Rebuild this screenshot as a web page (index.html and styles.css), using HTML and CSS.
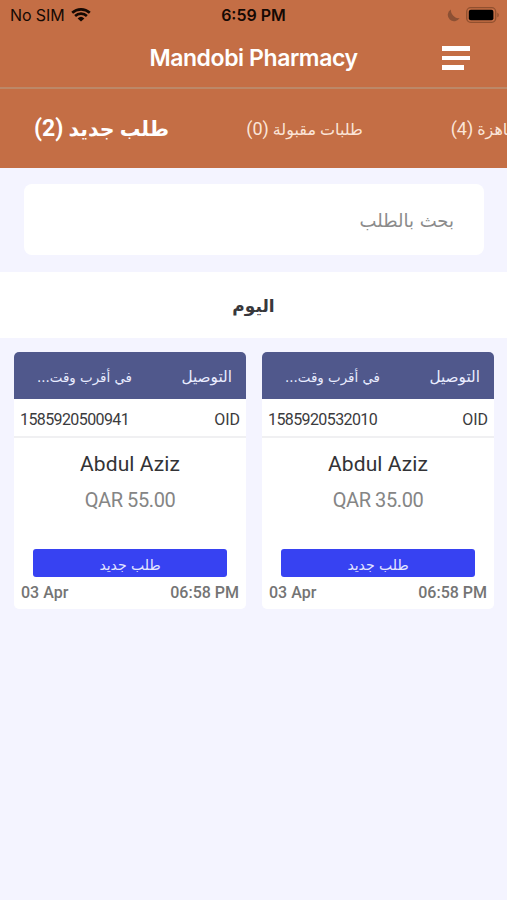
FILE: index.html
```html
<!DOCTYPE html>
<html lang="ar">
<head>
    <meta charset="UTF-8">
    <meta name="viewport" content="width=device-width, initial-scale=1.0">
    <title>Mandobi Pharmacy</title>
    <link rel="stylesheet" href="styles.css">
</head>
<body>
    <header class="header">
        <div class="status-bar">
            <div class="status-left">
                <span class="carrier">No SIM</span>
                <svg class="wifi" width="20" height="14" viewBox="0 0 20 14">
                    <path d="M1.2 4.8a12.9 12.9 0 0 1 17.6 0M4.1 8a8.6 8.6 0 0 1 11.8 0" fill="none" stroke="#150903" stroke-width="2.6"/>
                    <path d="M10 13.4L6.6 10.4a5 5 0 0 1 6.8 0z" fill="#150903"/>
                </svg>
            </div>
            <span class="clock">6:59 PM</span>
            <div class="status-right">
                <svg width="13" height="13" viewBox="0 0 13 13">
                    <path d="M3.8.6A6.3 6.3 0 1 0 12.6 9C8.4 10 3.8 6 3.8.6z" fill="#8c5034"/>
                </svg>
                <svg width="34" height="16" viewBox="0 0 34 16">
                    <rect x=".7" y=".7" width="29" height="14.6" rx="4" fill="none" stroke="#91502f" stroke-width="1.3"/>
                    <rect x="2.8" y="2.8" width="24.6" height="10.4" rx="2" fill="#000"/>
                    <path d="M31.3 5.7c2 .6 2 4 0 4.6z" fill="#91502f"/>
                </svg>
            </div>
        </div>
        <div class="title-bar">
            <h1 class="title">Mandobi Pharmacy</h1>
            <button class="menu" aria-label="Menu">
                <span></span>
                <span></span>
                <span class="short"></span>
            </button>
        </div>
    </header>

    <nav class="tabs">
        <a class="tab active" dir="rtl">طلب جديد <span class="count">(2)</span></a>
        <a class="tab" dir="rtl">طلبات مقبولة <span class="count">(0)</span></a>
        <a class="tab" dir="rtl">طلبات جاهزة <span class="count">(4)</span></a>
    </nav>

    <div class="search">
        <input class="search-input" type="text" dir="rtl" placeholder="بحث بالطلب">
    </div>

    <h2 class="day">اليوم</h2>

    <main class="orders">
        <div class="card">
            <div class="card-head" dir="rtl">
                <span class="delivery">التوصيل</span>
                <span class="when">في أقرب وقت...</span>
            </div>
            <div class="card-id">
                <span class="number">1585920500941</span>
                <span>OID</span>
            </div>
            <div class="card-body">
                <div class="name">Abdul Aziz</div>
                <div class="price">QAR 55.00</div>
                <button class="state">طلب جديد</button>
            </div>
            <div class="card-foot">
                <span>03 Apr</span>
                <span>06:58 PM</span>
            </div>
        </div>
        <div class="card">
            <div class="card-head" dir="rtl">
                <span class="delivery">التوصيل</span>
                <span class="when">في أقرب وقت...</span>
            </div>
            <div class="card-id">
                <span class="number">1585920532010</span>
                <span>OID</span>
            </div>
            <div class="card-body">
                <div class="name">Abdul Aziz</div>
                <div class="price">QAR 35.00</div>
                <button class="state">طلب جديد</button>
            </div>
            <div class="card-foot">
                <span>03 Apr</span>
                <span>06:58 PM</span>
            </div>
        </div>
    </main>
</body>
</html>
```
FILE: styles.css
```css
* {
    box-sizing: border-box;
}
body {
    margin: 0;
    min-height: 900px;
    background: #f4f4ff;
    font-family: Roboto, "DejaVu Sans", sans-serif;
    overflow: hidden;
}
button {
    border: 0;
    padding: 0;
    cursor: pointer;
}

/* header */
.header {
    height: 89px;
    background: #c46e45;
    border-bottom: 2px solid #bc8868;
    font-family: Inter, sans-serif;
}
.status-bar {
    display: grid;
    grid-template-columns: 1fr auto 1fr;
    align-items: center;
    height: 30px;
    padding: 0 10px;
    color: #150903;
    font-size: 16px;
}
.status-left, .status-right {
    display: flex;
    align-items: center;
}
.status-left {
    gap: 6px;
}
.status-right {
    justify-content: flex-end;
    gap: 6px;
    margin-right: -3px;
}
.carrier {
    letter-spacing: -.1px;
}
.clock {
    font-weight: 600;
}
.title-bar {
    display: grid;
    grid-template-columns: 1fr auto 1fr;
    align-items: center;
    height: 56px;
    padding: 0 37px;
}
.title {
    grid-column: 2;
    margin: 0;
    color: #fff;
    font-size: 23px;
    font-weight: 600;
    letter-spacing: -.42px;
}
.menu {
    display: flex;
    flex-direction: column;
    justify-self: end;
    gap: 5px;
    width: 28px;
    background: none;
}
.menu span {
    height: 4.5px;
    background: #fff;
}
.menu .short {
    width: 22px;
}

/* tabs */
.tabs {
    display: flex;
    height: 79px;
    background: #c46e45;
    overflow: hidden;
}
.tab {
    flex: 0 0 203px;
    line-height: 80px;
    text-align: center;
    white-space: nowrap;
    color: #fbe5d8;
    font-size: 16px;
}
.count {
    font-size: 18px;
    letter-spacing: -1px;
}
.tab.active {
    color: #fff;
    font-size: 20.5px;
    font-weight: bold;
}
.tab.active .count {
    font-size: 23px;
}

/* search */
.search {
    padding: 16px 23px 17px 24px;
}
.search-input {
    display: block;
    width: 100%;
    height: 71px;
    padding: 2px 30px 0;
    border: 0;
    border-radius: 8px;
    outline: none;
    background: #fff;
    font-family: "DejaVu Sans", sans-serif;
    font-size: 18px;
}
.search-input::placeholder {
    color: #8b8b8b;
}

.day {
    margin: 0;
    height: 66px;
    background: #fff;
    color: #38383c;
    font-size: 17px;
    line-height: 68px;
    text-align: center;
}

/* order cards */
.orders {
    display: grid;
    grid-template-columns: 1fr 1fr;
    gap: 16px;
    padding: 14px 13px 0 14px;
}
.card {
    height: 257px;
    border-radius: 5px;
    background: #fff;
    overflow: hidden;
}
.card-head {
    display: flex;
    align-items: center;
    justify-content: space-between;
    height: 47px;
    padding: 3px 14px 0 23px;
    background: #50588c;
    color: #e9ecff;
    font-family: "DejaVu Sans", sans-serif;
    white-space: nowrap;
}
.delivery {
    font-size: 15.3px;
}
.when {
    font-size: 13.4px;
}
.card-id {
    display: flex;
    align-items: center;
    justify-content: space-between;
    height: 39px;
    padding: 3px 6px 0;
    border-bottom: 2px solid #f0f0f2;
    color: #3b3b3d;
    font-size: 16px;
}
.number {
    letter-spacing: -.6px;
}
.card-body {
    height: 139px;
    padding: 0 19px;
    text-align: center;
}
.name {
    padding-top: 11px;
    color: #333336;
    font-size: 21px;
    line-height: 30px;
    letter-spacing: .1px;
}
.price {
    padding-top: 6px;
    color: #858585;
    font-size: 20px;
    line-height: 30px;
    letter-spacing: -.4px;
}
.state {
    display: block;
    width: 100%;
    height: 28px;
    margin-top: 34px;
    padding-top: 3px;
    border-radius: 3px;
    background: #3742f2;
    color: #e4e6ff;
    font-family: "DejaVu Sans", sans-serif;
    font-size: 14px;
}
.card-foot {
    display: flex;
    justify-content: space-between;
    padding: 6px 7px 0;
    color: #747474;
    font-size: 16px;
    font-weight: 500;
    line-height: 20px;
}
```
